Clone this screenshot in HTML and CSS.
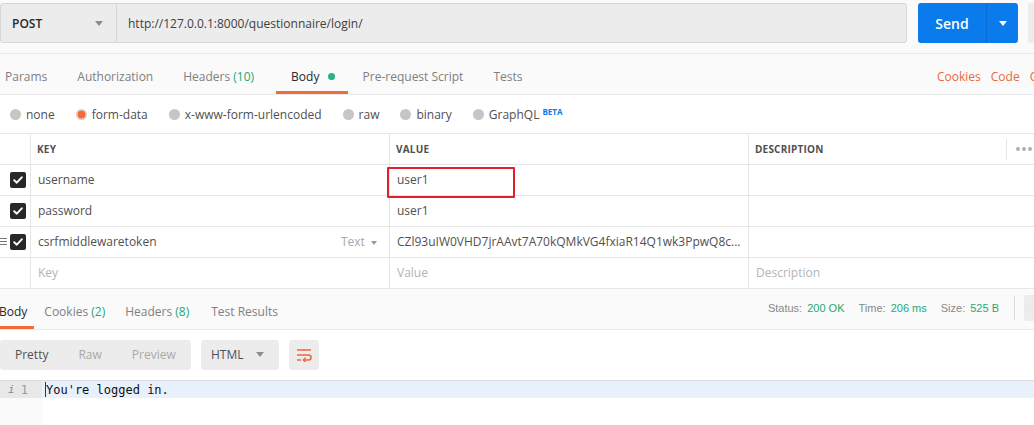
FILE: index.html
```html
<!DOCTYPE html>
<html>
<head>
<meta charset="utf-8">
<link rel="stylesheet" href="styles.css">
</head>
<body>
<div class="app">
  <div class="topbar">
    <div class="urlgroup">
      <div class="method"><span class="method-name">POST</span><span class="caret"></span></div>
      <div class="url">http://127.0.0.1:8000/questionnaire/login/</div>
    </div>
    <div class="send">
      <span class="send-label">Send</span>
      <span class="send-arrow"><span class="caret caret-white"></span></span>
    </div>
    <div class="save"></div>
  </div>

  <div class="reqtabs">
    <div class="tabs-left">
      <span class="tab first">Params</span>
      <span class="tab">Authorization</span>
      <span class="tab">Headers <span class="count">(10)</span></span>
      <span class="tab active">Body <span class="dot"></span></span>
      <span class="tab">Pre-request Script</span>
      <span class="tab">Tests</span>
    </div>
    <div class="tabs-right">
      <span class="link">Cookies</span>
      <span class="link">Code</span>
      <span class="link">Comments</span>
    </div>
  </div>

  <div class="bodytypes">
    <label class="radio"><span class="circle"></span>none</label>
    <label class="radio"><span class="circle selected"></span>form-data</label>
    <label class="radio"><span class="circle"></span>x-www-form-urlencoded</label>
    <label class="radio"><span class="circle"></span>raw</label>
    <label class="radio"><span class="circle"></span>binary</label>
    <label class="radio"><span class="circle"></span>GraphQL<sup class="beta">BETA</sup></label>
  </div>

  <div class="kvtable">
    <div class="cell c1 head"></div>
    <div class="cell c2 head">KEY</div>
    <div class="cell c3 head">VALUE</div>
    <div class="cell c4 head">DESCRIPTION</div>
    <div class="cell c5 head"><span class="more"><i></i><i></i><i></i></span></div>

    <div class="cell c1"><span class="handle"></span><span class="check"><svg width="10" height="8" viewBox="0 0 10 8"><path d="M1.2 4.2l2.6 2.5L8.8 1.3" fill="none" stroke="#fff" stroke-width="1.9" stroke-linecap="round" stroke-linejoin="round"/></svg></span></div>
    <div class="cell c2">username</div>
    <div class="cell c3 marked">user1<span class="redbox"></span></div>
    <div class="cell c4"></div>
    <div class="cell c5"></div>

    <div class="cell c1"><span class="handle"></span><span class="check"><svg width="10" height="8" viewBox="0 0 10 8"><path d="M1.2 4.2l2.6 2.5L8.8 1.3" fill="none" stroke="#fff" stroke-width="1.9" stroke-linecap="round" stroke-linejoin="round"/></svg></span></div>
    <div class="cell c2">password</div>
    <div class="cell c3">user1</div>
    <div class="cell c4"></div>
    <div class="cell c5"></div>

    <div class="cell c1"><span class="handle shown"><i></i><i></i><i></i></span><span class="check"><svg width="10" height="8" viewBox="0 0 10 8"><path d="M1.2 4.2l2.6 2.5L8.8 1.3" fill="none" stroke="#fff" stroke-width="1.9" stroke-linecap="round" stroke-linejoin="round"/></svg></span></div>
    <div class="cell c2 split"><span>csrfmiddlewaretoken</span><span class="type">Text <span class="caret caret-small"></span></span></div>
    <div class="cell c3">CZl93uIW0VHD7jrAAvt7A70kQMkVG4fxiaR14Q1wk3PpwQ8c...</div>
    <div class="cell c4"></div>
    <div class="cell c5"></div>

    <div class="cell c1"></div>
    <div class="cell c2 ph">Key</div>
    <div class="cell c3 ph">Value</div>
    <div class="cell c4 ph">Description</div>
    <div class="cell c5"></div>
  </div>

  <div class="restabs">
    <div class="tabs-left">
      <span class="rtab active">Body</span>
      <span class="rtab">Cookies <span class="count">(2)</span></span>
      <span class="rtab">Headers <span class="count">(8)</span></span>
      <span class="rtab">Test Results</span>
    </div>
    <div class="status">
      <span class="stat">Status: <b>200 OK</b></span>
      <span class="stat">Time: <b>206 ms</b></span>
      <span class="stat">Size: <b>525 B</b></span>
      <span class="vdiv"></span>
      <span class="savebtn"></span>
    </div>
  </div>

  <div class="restoolbar">
    <div class="seg">
      <span class="segitem on">Pretty</span>
      <span class="segitem">Raw</span>
      <span class="segitem">Preview</span>
    </div>
    <div class="fmt"><span>HTML</span><span class="caret"></span></div>
    <div class="wrap">
      <svg width="16" height="14" viewBox="0 0 16 14"><path d="M1 2h14M1 7h11.5a2.5 2.5 0 0 1 0 5H8M1 12h4" fill="none" stroke="#e8693f" stroke-width="1.6"/><path d="M9.5 9.8L7.3 12l2.2 2.2" fill="none" stroke="#e8693f" stroke-width="1.4"/></svg>
    </div>
  </div>

  <div class="code">
    <div class="line active">
      <div class="gutter"><span class="info">i</span><span class="num">1</span></div>
      <div class="text"><span class="cursor"></span>You're logged in.</div>
    </div>
    <div class="line rest">
      <div class="gutter"></div>
      <div class="text"></div>
    </div>
  </div>
</div>
</body>
</html>
```

FILE: styles.css
```css
* { box-sizing: border-box; }
html, body { margin: 0; padding: 0; }
body {
  width: 1034px;
  height: 425px;
  overflow: hidden;
  background: #fff;
  font-family: "Open Sans", "Liberation Sans", sans-serif;
  font-size: 12px;
  color: #505050;
}
.app { width: 1034px; overflow: hidden; }

/* top bar */
.topbar {
  height: 54px;
  padding-top: 3px;
  display: flex;
  align-items: flex-start;
  background: #fafafa;
  border-bottom: 1px solid #e9e9e9;
  overflow: hidden;
}
.topbar > * { flex-shrink: 0; }
.urlgroup {
  width: 907px;
  height: 40px;
  display: flex;
  background: #ececec;
  border: 1px solid #d6d6d6;
  border-radius: 3px;
}
.method {
  width: 116px;
  display: flex;
  align-items: center;
  justify-content: space-between;
  padding: 0 13px 0 11px;
  border-right: 1px solid #d6d6d6;
  font-weight: 600;
  color: #282828;
}
.url {
  flex: 1;
  display: flex;
  align-items: center;
  padding-left: 11px;
  color: #404040;
}
.caret {
  display: inline-block;
  width: 0; height: 0;
  border-left: 4px solid transparent;
  border-right: 4px solid transparent;
  border-top: 5px solid #8c8c8c;
}
.caret-white { border-top-color: #fff; }
.caret-small { border-left-width: 3.5px; border-right-width: 3.5px; border-top-width: 4px; border-top-color: #9a9a9a; vertical-align: middle; margin-left: 3px; }
.send {
  margin-left: 11px;
  width: 100px;
  height: 40px;
  display: flex;
  background: #097bed;
  border-radius: 3px;
  color: #fff;
}
.send-label {
  width: 69px;
  display: flex;
  align-items: center;
  justify-content: center;
  font-size: 14px;
  font-weight: 600;
  border-right: 1px solid #0a6ccf;
}
.send-arrow {
  flex: 1;
  display: flex;
  align-items: center;
  justify-content: center;
}
.save {
  margin-left: 10px;
  width: 30px;
  height: 40px;
  background: #ececec;
  border-radius: 3px;
}

/* request tabs */
.reqtabs {
  height: 41px;
  display: flex;
  justify-content: space-between;
  background: #fafafa;
  border-bottom: 1px solid #e9e9e9;
  overflow: hidden;
}
.tabs-left { display: flex; flex-shrink: 0; }
.tab {
  display: flex;
  align-items: center;
  padding: 5px 15px 0;
  color: #808080;
  white-space: pre;
  position: relative;
}
.tab.first { margin-left: -10px; }
.tab.active { color: #282828; margin-left: 7px; padding-right: 13px; }
.tab.active::after {
  content: "";
  position: absolute;
  left: 0; right: 0; bottom: 0;
  height: 3px;
  background: #f26b3a;
}
.count { color: #26a878; }
.dot {
  display: inline-block;
  width: 7px; height: 7px;
  border-radius: 50%;
  background: #26b47f;
  margin-left: 5px;
}
.tabs-right {
  display: flex;
  align-items: center;
  padding-top: 5px;
  gap: 10px;
  flex-shrink: 0;
  width: 97px;
  white-space: nowrap;
  overflow: hidden;
}
.link { color: #e8693f; }

/* body types */
.bodytypes {
  height: 38px;
  display: flex;
  align-items: center;
  gap: 21px;
  padding-left: 10px;
}
.radio { display: flex; align-items: center; color: #505050; }
.circle {
  width: 11px; height: 11px;
  border-radius: 50%;
  background: #c6c6c6;
  margin-right: 5px;
}
.circle.selected {
  background: radial-gradient(circle, #f26b3a 0 3.6px, #dcc9c2 4.2px);
}
.beta {
  font-size: 8px;
  font-weight: 700;
  color: #097bed;
  margin-left: 3px;
  position: relative;
  top: -3px;
}

/* key-value table */
.kvtable {
  display: grid;
  grid-template-columns: 30px 359px 359px 258px 28px;
  border-top: 1px solid #e6e6e6;
}
.cell {
  height: 31px;
  border-bottom: 1px solid #e6e6e6;
  display: flex;
  align-items: center;
  padding-left: 7px;
  padding-bottom: 1px;
  color: #505050;
  white-space: nowrap;
  overflow: hidden;
  position: relative;
}
.c2, .c3, .c4 { border-left: 1px solid #e6e6e6; }
.c1 { padding-left: 0; display: grid; grid-template-columns: 10px 16px; align-items: center; }
.head { font-size: 10px; font-weight: 700; color: #505050; padding-left: 6px; letter-spacing: 0.2px; }
.c5.head { padding-left: 10px; }
.c5.head::before {
  content: "";
  position: absolute;
  left: 0; top: 5px; bottom: 4px;
  border-left: 1px solid #e6e6e6;
}
.more { display: flex; gap: 2px; }
.more i { display: block; width: 4px; height: 4px; border-radius: 50%; background: #b0b0b0; }
.check {
  width: 16px; height: 16px;
  border-radius: 2px;
  background: #282828;
  display: flex;
  align-items: center;
  justify-content: center;
}
.handle { display: flex; flex-direction: column; gap: 2px; width: 7px; }
.handle i { display: block; height: 1px; background: #777; }
.split { justify-content: space-between; padding-right: 12px; }
.type { color: #a8a8a8; }
.ph { color: #b4b4b4; }
.marked { overflow: visible; z-index: 2; }
.redbox {
  position: absolute;
  left: -3px; top: 2px;
  width: 128px; height: 31px;
  border: 2px solid #e0212d;
  border-radius: 1px;
}

/* response tabs */
.restabs {
  height: 41px;
  display: flex;
  justify-content: space-between;
  background: #fafafa;
  border-bottom: 1px solid #e9e9e9;
}
.rtab {
  display: flex;
  align-items: center;
  padding: 4px 10px 0;
  color: #808080;
  white-space: pre;
  position: relative;
}
.rtab:first-child { margin-left: -11px; padding-left: 10px; padding-right: 7px; }
.rtab:last-child { padding-left: 12px; }
.rtab.active { color: #282828; }
.rtab.active::after {
  content: "";
  position: absolute;
  left: 0; right: 0; bottom: 0;
  height: 3px;
  background: #f26b3a;
}
.status {
  display: flex;
  align-items: center;
  font-family: "Liberation Sans", Arial, sans-serif;
  font-size: 11px;
  color: #888;
  padding-bottom: 2px;
}
.stat { margin-left: 14px; }
.stat b { font-weight: 400; color: #26a878; margin-left: 2px; }
.vdiv { width: 1px; height: 24px; background: #dcdcdc; margin-left: 15px; }
.savebtn { width: 20px; height: 26px; background: #ececec; border-radius: 3px; margin-left: 9px; margin-right: -10px; }

/* response toolbar */
.restoolbar {
  height: 50px;
  display: flex;
  align-items: center;
  gap: 10px;
  padding-bottom: 1px;
}
.seg {
  width: 191px;
  height: 30px;
  background: #ececec;
  border-radius: 3px;
  display: flex;
  align-items: center;
}
.segitem { color: #a8a8a8; padding: 0 0 0 15px; margin-right: 15px; }
.segitem.on { color: #505050; }
.fmt {
  width: 78px;
  height: 30px;
  background: #ececec;
  border-radius: 3px;
  display: flex;
  align-items: center;
  justify-content: space-between;
  padding: 0 15px 0 10px;
  color: #505050;
}
.wrap {
  width: 30px;
  height: 30px;
  background: #ececec;
  border-radius: 3px;
  display: flex;
  align-items: center;
  justify-content: center;
}

/* code */
.code { border-top: 1px solid #dcdcdc; }
.line { display: flex; }
.line.active { height: 17px; background: #e7f0fb; }
.line.rest { height: 30px; }
.gutter {
  width: 42px;
  display: flex;
  align-items: center;
  background: #fafafa;
  font-family: "DejaVu Sans Mono", monospace;
  font-size: 12px;
  color: #999;
}
.line.active .gutter { background: #e8e8e8; }
.info { font-style: italic; margin-left: 8px; color: #888; font-size: 11px; }
.num { margin-left: 6px; }
.text {
  flex: 1;
  display: flex;
  align-items: center;
  padding-left: 3px;
  font-family: "DejaVu Sans Mono", monospace;
  font-size: 12px;
  color: #111;
  white-space: pre;
}
.cursor { width: 1px; height: 15px; background: #333; margin-right: 0; }
```
